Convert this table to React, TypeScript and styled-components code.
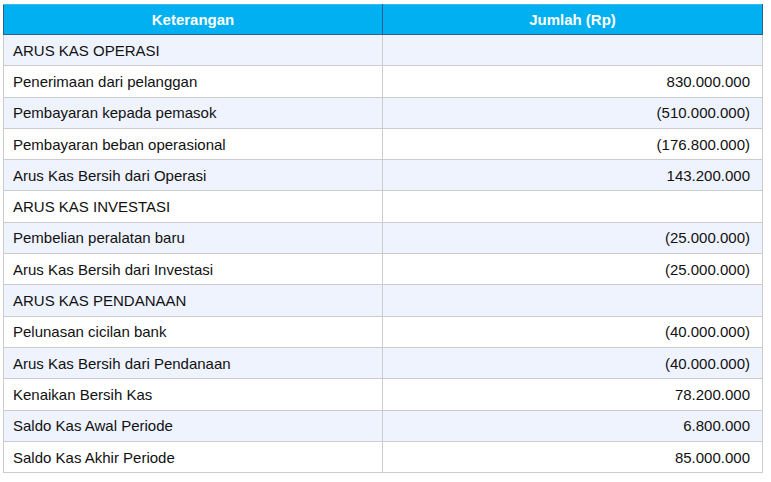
import React from "react";
import styled, { createGlobalStyle } from "styled-components";

const Global = createGlobalStyle`
  html, body { margin: 0; padding: 0; background: #ffffff; }
  body { font-family: "Liberation Sans", Arial, sans-serif; }
`;

const Page = styled.div`
  padding: 4px 0 0 3px;
`;

const Table = styled.table`
  width: 759px;
  border-collapse: collapse;
  table-layout: fixed;
  font-family: "Liberation Sans", Arial, sans-serif;
  font-size: 15px;
  color: #111111;
`;

const HeadCell = styled.th`
  background: #00b0f0;
  color: #ffffff;
  font-weight: bold;
  font-size: 15px;
  height: 29px;
  padding: 0 8px;
  text-align: center;
  border: 1px solid #2f5f8f;
  border-top-color: #35bdf0;
`;

const Row = styled.tr<{ $shade: boolean }>`
  height: 31.3px;
  background: ${(p) => (p.$shade ? "#eef3fd" : "#ffffff")};
`;

const Cell = styled.td<{ $num?: boolean }>`
  border: 1px solid #cccccc;
  padding: 0 12px 0 9px;
  text-align: ${(p) => (p.$num ? "right" : "left")};
  white-space: nowrap;
`;

const rows: [string, string][] = [
  ["ARUS KAS OPERASI", ""],
  ["Penerimaan dari pelanggan", "830.000.000"],
  ["Pembayaran kepada pemasok", "(510.000.000)"],
  ["Pembayaran beban operasional", "(176.800.000)"],
  ["Arus Kas Bersih dari Operasi", "143.200.000"],
  ["ARUS KAS INVESTASI", ""],
  ["Pembelian peralatan baru", "(25.000.000)"],
  ["Arus Kas Bersih dari Investasi", "(25.000.000)"],
  ["ARUS KAS PENDANAAN", ""],
  ["Pelunasan cicilan bank", "(40.000.000)"],
  ["Arus Kas Bersih dari Pendanaan", "(40.000.000)"],
  ["Kenaikan Bersih Kas", "78.200.000"],
  ["Saldo Kas Awal Periode", "6.800.000"],
  ["Saldo Kas Akhir Periode", "85.000.000"],
];

export default function App() {
  return (
    <Page>
      <Global />
      <Table>
        <colgroup>
          <col style={{ width: 379 }} />
          <col style={{ width: 380 }} />
        </colgroup>
        <thead>
          <tr>
            <HeadCell>Keterangan</HeadCell>
            <HeadCell>Jumlah (Rp)</HeadCell>
          </tr>
        </thead>
        <tbody>
          {rows.map(([label, value], i) => (
            <Row key={i} $shade={i % 2 === 0}>
              <Cell>{label}</Cell>
              <Cell $num>{value}</Cell>
            </Row>
          ))}
        </tbody>
      </Table>
    </Page>
  );
}
